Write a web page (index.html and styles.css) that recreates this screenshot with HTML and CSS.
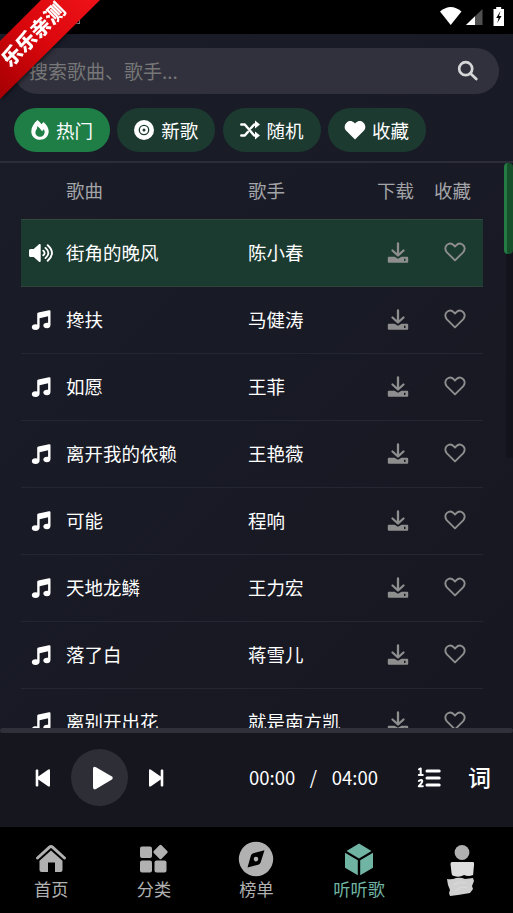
FILE: index.html
```html
<!DOCTYPE html>
<html lang="zh-CN">
<head>
<meta charset="utf-8">
<title>听听歌</title>
<link rel="stylesheet" href="styles.css">
</head>
<body>
<svg class="defs" aria-hidden="true">
  <symbol id="note" viewBox="0 0 20 20"><path fill="currentColor" d="M6.2 4.200c0-.9.4-1.400 1.200-1.700L18 .3c.8-.2 1.500.2 1.500 1v13.700c0 2-1.500 3.300-3.600 3.300s-3.600-1.100-3.600-2.700 1.600-2.900 3.800-2.900l1 .1V6.200L8.600 8.300v8.500c0 1.900-1.600 3.100-4 3.100S.8 18.800.8 17.200s1.500-2.900 3.700-2.900l1.700.2z"/></symbol>
  <symbol id="download" viewBox="0 0 22 22"><path fill="none" stroke="currentColor" stroke-width="2.300" stroke-linecap="round" stroke-linejoin="round" d="M11 1.500v11.500M5.500 8.500L11 13.500l5.500-5"/><path fill="currentColor" fill-rule="evenodd" d="M1.800 14.800h5.700l3.500 2 3.500-2h5.700q1 0 1 1v4q0 1-1 1H1.800q-1 0-1-1v-4q0-1 1-1zM17 16.800v2.200h1.500v-2.200z"/></symbol>
  <symbol id="heart" viewBox="0 0 22 20"><path fill="none" stroke="currentColor" stroke-width="1.900" stroke-linejoin="round" d="M11 18.400L2.900 10.300C.6 7.800 1 4.600 3 2.900c2.300-1.900 5.100-1.400 6.900.5L11 4.600l1.100-1.200c1.800-1.900 4.600-2.400 6.900-.5 2 1.700 2.400 4.900.1 7.400z"/></symbol>
</svg>
<div class="app">
  <header class="status"><i class="notice"></i>
    <svg width="68" height="22" viewBox="0 0 68 22"><path fill="#fff" d="M0 5.500Q10.700-3.500 21.500 5.500L10.700 19z"/><path fill="#505050" d="M42.500 3v16H26z"/><path fill="#fff" d="M35 10.300V19h-9z"/><path fill="#fff" d="M53.500 3h2.700V1h5v2h2.800v17H53.500z"/><path fill="#000" d="M60.500 5l-4.300 7h2.400l-1.300 5 4.200-7H59z"/></svg>
  </header>
  <div class="search"><span>搜索歌曲、歌手...</span>
    <svg width="22" height="22" viewBox="0 0 22 22"><g fill="none" stroke="#d6d6d8" stroke-width="2.700" stroke-linecap="round"><circle cx="8.700" cy="8.700" r="6.500"/><path d="M13.500 13.500l5.800 5.500"/></g></svg>
  </div>
  <nav class="tabs">
    <button class="tab active"><svg width="20" height="22" viewBox="0 0 20 22"><path fill="#fff" fill-rule="evenodd" d="M7.500 1c1.500 1.200 2.800 2.500 4 4.200L13.500 3c3.300 3 5.200 6.200 5.200 9.300 0 5-3.900 8.500-8.700 8.500s-8.700-3.500-8.700-8.400C1.300 8.300 3.800 4.300 7.500 1zM7 9.500c-2 2.500-2.200 5.200-.4 7 1.800 1.700 5 1.700 6.700 0 1.600-1.700 1.800-4 .6-6.200l-1.800 2C10.500 10 9 8.500 7.300 7z"/></svg>热门</button>
    <button class="tab"><svg width="22" height="22" viewBox="0 0 22 22"><circle cx="11" cy="11" r="10" fill="#fff"/><circle cx="11" cy="11" r="4.700" fill="none" stroke="#1c3a30" stroke-width="1.300"/><circle cx="11" cy="11" r="1.500" fill="#1c3a30"/></svg>新歌</button>
    <button class="tab"><svg width="22" height="22" viewBox="0 0 22 22"><g stroke="#fff" fill="none" stroke-width="2.500" stroke-linecap="round" stroke-linejoin="round"><path d="M2.300 5.500h3.500l9.400 11h2.300M2.300 16.500h3.500l3-3.500M12 9l3.200-3.500h2.300"/></g><path fill="#fff" d="M16 1.500l5 4-5 4zM16 12.500l5 4-5 4z"/></svg>随机</button>
    <button class="tab"><svg width="22" height="20" viewBox="0 0 22 20"><path fill="#fff" d="M11 19.500L2 10.600C-.1 8.300.4 4.300 2.800 2.400 5.200.3 8.200.7 10 2.600l1 1 1-1c1.800-1.900 4.800-2.300 7.200-.2 2.400 1.900 2.900 5.900.8 8.200z"/></svg>收藏</button>
  </nav>
  <main class="list">
    <div class="row head"><i></i><span>歌曲</span><span>歌手</span><b>下载</b><b>收藏</b></div>
    <div class="row current"><svg class="speaker" viewBox="0 0 26 20"><path fill="#fff" d="M2.500 6h3.200L11 1.200c.8-.6 1.700-.2 1.700.8v16c0 1-.9 1.400-1.700.8L5.700 14H2.500Q1 14 1 12.500v-5Q1 6 2.500 6z"/><path fill="none" stroke="#fff" stroke-width="1.900" stroke-linecap="round" d="M15.300 7.700q2.600 2.300 0 4.600M17.500 4.900q5.700 5.100 0 10.200M19.700 2.200q8.500 7.800 0 15.600"/></svg><span>街角的晚风</span><span>陈小春</span><svg class="dl"><use href="#download"/></svg><svg class="like"><use href="#heart"/></svg></div>
    <div class="row"><svg class="note"><use href="#note"/></svg><span>搀扶</span><span>马健涛</span><svg class="dl"><use href="#download"/></svg><svg class="like"><use href="#heart"/></svg></div>
    <div class="row"><svg class="note"><use href="#note"/></svg><span>如愿</span><span>王菲</span><svg class="dl"><use href="#download"/></svg><svg class="like"><use href="#heart"/></svg></div>
    <div class="row"><svg class="note"><use href="#note"/></svg><span>离开我的依赖</span><span>王艳薇</span><svg class="dl"><use href="#download"/></svg><svg class="like"><use href="#heart"/></svg></div>
    <div class="row"><svg class="note"><use href="#note"/></svg><span>可能</span><span>程响</span><svg class="dl"><use href="#download"/></svg><svg class="like"><use href="#heart"/></svg></div>
    <div class="row"><svg class="note"><use href="#note"/></svg><span>天地龙鳞</span><span>王力宏</span><svg class="dl"><use href="#download"/></svg><svg class="like"><use href="#heart"/></svg></div>
    <div class="row"><svg class="note"><use href="#note"/></svg><span>落了白</span><span>蒋雪儿</span><svg class="dl"><use href="#download"/></svg><svg class="like"><use href="#heart"/></svg></div>
    <div class="row"><svg class="note"><use href="#note"/></svg><span>离别开出花</span><span>就是南方凯</span><svg class="dl"><use href="#download"/></svg><svg class="like"><use href="#heart"/></svg></div>
    <div class="track"></div>
    <div class="scrollbar"></div>
  </main>
  <div class="progress"></div>
  <section class="player">
    <svg width="16" height="18" viewBox="0 0 16 18"><path fill="#fff" d="M.7 1.500q0-1 1-1h.6q1 0 1 1v6L13 .7q2-1.200 2 1v14.600q0 2.200-2 1l-9.700-6.800v6q0 1-1 1h-.6q-1 0-1-1z"/></svg>
    <div class="play"><svg width="22" height="24" viewBox="0 0 22 24"><path fill="#fff" d="M1 3Q1-.5 4 1.200l15.500 9q2.500 1.800 0 3.600L4 23q-3 1.500-3-2z"/></svg></div>
    <svg width="16" height="18" viewBox="0 0 16 18"><path fill="#fff" d="M15.300 1.500q0-1-1-1h-.6q-1 0-1 1v6L3 .7Q1-.5 1 1.700v14.600q0 2.200 2 1l9.700-6.800v6q0 1 1 1h.6q1 0 1-1z"/></svg>
    <div class="time"><span>00:00</span><span>/</span><span>04:00</span></div>
    <svg class="order" width="24" height="22" viewBox="0 0 24 22"><path fill="none" stroke="#fff" stroke-width="3" stroke-linecap="round" d="M10 4h12.200M10 11h12.200M10 18h12.200"/><path fill="none" stroke="#fff" stroke-width="2" stroke-linecap="round" stroke-linejoin="round" d="M2 2.300l1.700-.8v6M1.800 8h4M1.800 14q3.300-2.200 3.500.1 0 1.500-3.500 5.100h4"/></svg>
    <strong>词</strong>
  </section>
  <footer class="dock">
    <div class="item"><svg width="32" height="32" viewBox="0 0 32 32"><path fill="none" stroke="currentColor" stroke-width="3" stroke-linecap="round" stroke-linejoin="round" d="M2.500 15L14.500 4.200q1.500-1.300 3 0L29.500 15"/><path fill="currentColor" d="M16 7.500l11.500 10.300V27q0 2-2 2H20V19.500h-7V29H6.500q-2 0-2-2v-9.200z"/></svg><span>首页</span></div>
    <div class="item"><svg width="32" height="32" viewBox="0 0 32 32"><g fill="currentColor"><rect x="2" y="3.500" width="12" height="11.500" rx="2"/><rect x="2" y="17.500" width="12" height="12" rx="2"/><rect x="16.500" y="17.500" width="12" height="12" rx="2"/><rect x="17" y="3.500" width="11" height="11" rx="1.500" transform="rotate(45 22.500 9)"/></g></svg><span>分类</span></div>
    <div class="item"><svg width="36" height="36" viewBox="0 0 36 36"><path fill="currentColor" fill-rule="evenodd" d="M18 .8a17.200 17.200 0 100 34.400A17.200 17.200 0 0018 .8zM26.500 9.200l-4 12.500q-.8 1.500-2.300 2L9.500 26.500 13 14.300q.8-1.500 2.300-2zM18 15.800a2.300 2.300 0 100 4.600 2.300 2.300 0 000-4.600z"/></svg><span>榜单</span></div>
    <div class="item on"><svg width="32" height="34" viewBox="0 0 32 34"><path fill="currentColor" d="M16 1.500L28.500 9 16 16.500 3.500 9zM2 10.700l12.800 7.500v15L2 25.700zM30 10.700l-12.800 7.500v15L30 25.700z"/></svg><span>听听歌</span></div>
    <div class="item me"><svg width="30" height="54" viewBox="0 0 30 54"><circle cx="16" cy="9.500" r="7.400" fill="#b1b1b1"/><path fill="#dedede" d="M6 19h21q1.300 0 1.100 2l-1 11q-5 2-9 0-5 3-10 1-2-.2-2.400-2L4.500 21q0-2 1.500-2z"/><path fill="#cfcfcf" d="M1 36q5 1 9-1 5-1 9 1l8-1 1 3-2 5 1 3-3 4-6 1-6 1-8 1-1-3 1-3-2-5z"/><path fill="none" stroke="#dadada" d="M7 42l7-3 6 1M9 48l6-4 7 1M8 22v7"/></svg></div>
  </footer>
  <svg class="ribbon" width="104" height="104" viewBox="0 0 104 104"><defs><linearGradient id="red" gradientUnits="userSpaceOnUse" x1="0" y1="90" x2="90" y2="0"><stop offset="0" stop-color="#a80004"/><stop offset=".5" stop-color="#d9070c"/><stop offset="1" stop-color="#ed1117"/></linearGradient></defs><path fill="url(#red)" d="M41 0h59L0 99V41z"/><text x="33" y="42" transform="rotate(-45 33 34)">乐乐亲测</text></svg>
</div>
</body>
</html>
```
FILE: styles.css
```css
* { box-sizing: border-box; }
body { margin: 0; background: #000; color: #fff; font-family: "Noto Sans CJK SC", sans-serif; font-size: 18.500px; }
.defs { position: absolute; width: 0; height: 0; }
.app { position: relative; width: 513px; height: 913px; display: flex; flex-direction: column; overflow: hidden; background: linear-gradient(135deg, #1a1d29, #16161f); }
.status { height: 34px; flex: none; background: #000; display: flex; justify-content: space-between; padding: 6px 5px 0 0; }
.notice { width: 7px; height: 7px; margin: 11px 0 0 73px; border: solid #aaa; border-width: 0 1px 1px 0; }
.search { height: 46px; flex: none; margin: 14px 14px 0; padding: 0 20px 0 14px; border-radius: 23px; background: #30313c; color: #777; display: flex; align-items: center; justify-content: space-between; }
.search span { font-size: 19px; margin: -1px 0 0 1px; }
.tabs { height: 69px; flex: none; padding: 14px 14px 0; display: flex; gap: 7.300px; border-bottom: 2px solid #2c2d39; }
.tab { width: 98px; height: 44px; padding: 0 0 1px 16px; border: 0; border-radius: 22px; background: #1c3a30; color: #fff; font: inherit; display: flex; align-items: center; gap: 6px; white-space: nowrap; }
.tab.active { width: 96px; background: #1e7e46; }
.list { position: relative; height: 565px; flex: none; padding-left: 21px; overflow: hidden; }
.row { width: 462px; height: 67px; display: grid; grid-template-columns: 45px 182px 121px 57px 57px; align-items: center; border-bottom: 1px solid #242631; white-space: nowrap; }
.row span { margin-top: -2px; }
.row.head { height: 56px; color: #a3a4a8; border: 0; }
.row.head b { font-weight: 400; margin: -2px 0 0 8px; }
.row.current { height: 68px; background: #1b3a30; border-top: 1px solid #33483f; border-bottom-color: #2c4439; }
.note { width: 20px; height: 20px; margin-left: 9.500px; }
.speaker { width: 26px; height: 20px; margin-left: 6.500px; }
.dl { width: 22px; height: 22px; justify-self: center; color: #8e8e8e; }
.like { width: 22px; height: 20px; justify-self: center; margin-top: -2px; color: #8e8e8e; }
.track { position: absolute; right: 0; top: 0; width: 7px; height: 295px; background: #12131b; }
.scrollbar { position: absolute; right: 0; top: 0; width: 9px; height: 91px; border-radius: 4px; border-left: 3px solid #237c43; background: #15502b; }
.progress { height: 5px; flex: none; border-radius: 3px; background: #2f3039; }
.player { height: 94px; flex: none; background: #16161f; display: flex; align-items: center; padding: 0 22px 5px 35px; }
.play { width: 57px; height: 57px; margin: 0 20px; border-radius: 50%; background: #2e2e37; display: flex; align-items: center; justify-content: center; padding-left: 6px; }
.time { margin: -2px 0 0 85px; width: 129px; display: flex; justify-content: space-between; }
.order { margin-left: 39px; }
.player strong { margin: -4px 0 0 auto; font-size: 23px; font-weight: 500; }
.dock { height: 86px; flex: none; background: #000; color: #b1b1b1; display: grid; grid-template-columns: repeat(5, 1fr); font-size: 17.200px; }
.item { display: flex; flex-direction: column; align-items: center; padding-top: 14px; }
.item svg { height: 36px; }
.item span { line-height: 24px; }
.item.on { color: #70b4a3; }
.item.me { padding: 16px 2px 0 0; }
.item.me svg { height: 54px; }
.ribbon { position: absolute; left: 0; top: 0; filter: drop-shadow(1px 1px 2px #0009); }
.ribbon text { fill: #fff; font-size: 20px; font-weight: 900; text-anchor: middle; }
```
